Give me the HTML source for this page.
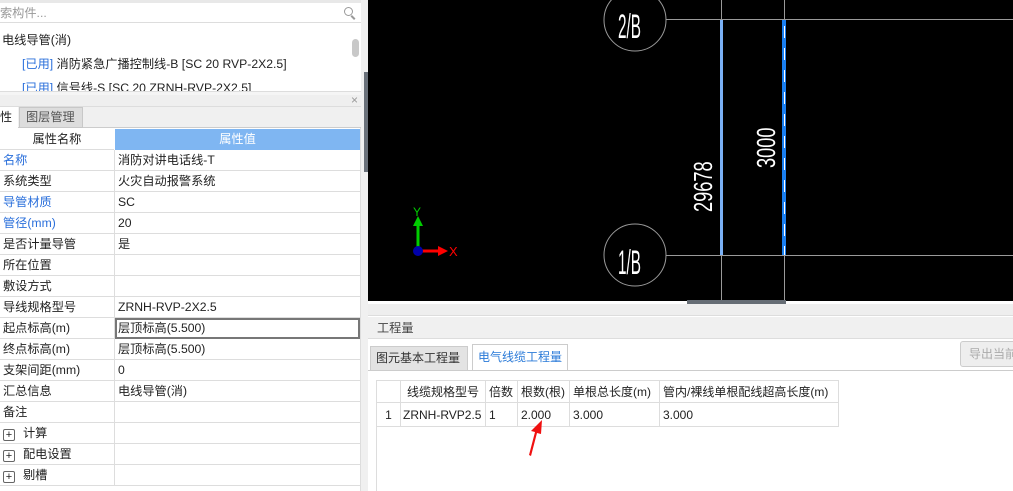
<!DOCTYPE html>
<html><head><meta charset="utf-8"><style>
*{margin:0;padding:0;box-sizing:border-box}
body{width:1013px;height:491px;overflow:hidden;background:#fff;position:relative;font-family:"Liberation Sans","Noto Sans CJK SC",sans-serif;font-size:12.2px;color:#222}
.a{position:absolute;white-space:nowrap}
.row{position:absolute;left:0;width:360px;height:21px;border-bottom:1px solid #ddd}
.row span{position:absolute;top:0;line-height:20px;white-space:nowrap}
.row .k{left:3px}.row .v{left:118px}
.row .sep{position:absolute;left:114px;top:0;width:1px;height:21px;background:#ddd}
.blue{color:#2a6fdb}
.pl{display:inline-block;width:12px;height:12px;border:1px solid #666;border-radius:2px;font-size:11px;line-height:10px;text-align:center;margin-right:8px;vertical-align:-1px;font-style:normal}
td{border:1px solid #ddd;height:22px;padding:0 3px;white-space:nowrap;font-size:12px;overflow:hidden}
table{border-collapse:collapse;table-layout:fixed}
</style></head><body>
<div class="a" style="left:0;top:0;width:362px;height:3px;background:#e8e8e8"></div>
<div class="a" style="left:0;top:3px;width:362px;height:20px;border-bottom:1px solid #ddd;color:#999;line-height:20px">索构件...</div>
<div class="a" style="left:344px;top:7px;width:9px;height:9px;border:1.5px solid #999;border-radius:50%"></div>
<div class="a" style="left:352px;top:15px;width:2px;height:5px;background:#999;transform:rotate(-45deg)"></div>
<div class="a" style="left:2px;top:30px">电线导管(消)</div>
<div class="a" style="left:22px;top:54px"><span class="blue">[已用]</span> 消防紧急广播控制线-B [SC 20 RVP-2X2.5]</div>
<div class="a" style="left:22px;top:78px;height:13px;overflow:hidden"><span class="blue">[已用]</span> 信号线-S [SC 20 ZRNH-RVP-2X2.5]</div>
<div class="a" style="left:352px;top:39px;width:7px;height:18px;background:#c8c8c8;border-radius:4px"></div>
<div class="a" style="left:362px;top:0;width:1px;height:92px;background:#ddd"></div>
<div class="a" style="left:0;top:91px;width:362px;height:5px;background:#f5f5f5;border-top:1px solid #ddd"></div>
<div class="a" style="left:0;top:95px;width:362px;height:12px;background:#efefef;border-bottom:1px solid #ddd"></div>
<div class="a" style="left:351px;top:93px;color:#999;font-size:12px">×</div>
<div class="a" style="left:0;top:107px;width:362px;height:21px;background:#f0f0f0;border-bottom:1px solid #ccc"></div>
<div class="a" style="left:0;top:107px;width:18px;height:21px;background:#fff;line-height:21px">性</div>
<div class="a" style="left:19px;top:107px;width:64px;height:21px;background:#ddd;border:1px solid #c8c8c8;color:#555;line-height:19px;padding-left:6px">图层管理</div>
<div class="a" style="left:0;top:129px;width:114px;height:21px;text-align:center;line-height:21px;border-bottom:1px solid #ddd">属性名称</div>
<div class="a" style="left:115px;top:129px;width:245px;height:21px;background:#7fb6f2;color:#fff;text-align:center;line-height:21px">属性值</div>
<div class="a" style="left:0;top:150px">
<div class="row" style="top:0"><span class="k blue">名称</span><div class="sep"></div><span class="v">消防对讲电话线-T</span></div>
<div class="row" style="top:21px"><span class="k">系统类型</span><div class="sep"></div><span class="v">火灾自动报警系统</span></div>
<div class="row" style="top:42px"><span class="k blue">导管材质</span><div class="sep"></div><span class="v">SC</span></div>
<div class="row" style="top:63px"><span class="k blue">管径(mm)</span><div class="sep"></div><span class="v">20</span></div>
<div class="row" style="top:84px"><span class="k">是否计量导管</span><div class="sep"></div><span class="v">是</span></div>
<div class="row" style="top:105px"><span class="k">所在位置</span><div class="sep"></div></div>
<div class="row" style="top:126px"><span class="k">敷设方式</span><div class="sep"></div></div>
<div class="row" style="top:147px"><span class="k">导线规格型号</span><div class="sep"></div><span class="v">ZRNH-RVP-2X2.5</span></div>
<div class="row" style="top:168px"><span class="k">起点标高(m)</span><div class="sep"></div><span class="v">层顶标高(5.500)</span><div class="a" style="left:115px;top:0;width:245px;height:21px;border:2px solid #777"></div></div>
<div class="row" style="top:189px"><span class="k">终点标高(m)</span><div class="sep"></div><span class="v">层顶标高(5.500)</span></div>
<div class="row" style="top:210px"><span class="k">支架间距(mm)</span><div class="sep"></div><span class="v">0</span></div>
<div class="row" style="top:231px"><span class="k">汇总信息</span><div class="sep"></div><span class="v">电线导管(消)</span></div>
<div class="row" style="top:252px"><span class="k">备注</span><div class="sep"></div></div>
<div class="row" style="top:273px"><span class="k"><i class="pl">+</i>计算</span><div class="sep"></div></div>
<div class="row" style="top:294px"><span class="k"><i class="pl">+</i>配电设置</span><div class="sep"></div></div>
<div class="row" style="top:315px"><span class="k"><i class="pl">+</i>剔槽</span><div class="sep"></div></div>
</div>
<div class="a" style="left:360px;top:128px;width:1px;height:363px;background:#ddd"></div>
<div class="a" style="left:361px;top:0;width:7px;height:491px;background:#f0f0f0"></div>
<div class="a" style="left:364px;top:72px;width:4px;height:100px;background:#6a717a"></div>
<div class="a" style="left:368px;top:0;width:645px;height:301px;background:#000">
<svg width="645" height="301" style="position:absolute;left:0;top:0">
<g stroke="#9a9a9a" stroke-width="1" fill="none">
<circle cx="267" cy="20" r="31"/><circle cx="267" cy="255" r="31"/>
<line x1="298" y1="19.5" x2="645" y2="19.5"/><line x1="298" y1="255.5" x2="645" y2="255.5"/>
<line x1="353.5" y1="0" x2="353.5" y2="301"/><line x1="416.5" y1="0" x2="416.5" y2="301"/>
</g>
<line x1="353.5" y1="20" x2="353.5" y2="255" stroke="#7ab0f5" stroke-width="3"/>
<line x1="416" y1="20" x2="416" y2="255" stroke="#1a7ff0" stroke-width="4"/>
<line x1="416.5" y1="26" x2="416.5" y2="255" stroke="#fff" stroke-width="1" stroke-dasharray="12 10"/>
<g fill="#fff" font-family="Liberation Sans,sans-serif">
<text font-size="34" transform="translate(250 38) scale(0.45 1)">2/B</text>
<text font-size="34" transform="translate(250 274) scale(0.45 1)">1/B</text>
<text font-size="26" transform="translate(344 212) rotate(-90) scale(0.7 1)">29678</text>
<text font-size="26" transform="translate(407 168) rotate(-90) scale(0.7 1)">3000</text>
</g>
<line x1="50" y1="251" x2="50" y2="226" stroke="#0c0" stroke-width="3"/>
<polygon points="45,226 55,226 50,216" fill="#0c0"/>
<text x="45" y="216" fill="#0c0" font-size="12" font-family="Liberation Sans">Y</text>
<line x1="50" y1="251" x2="72" y2="251" stroke="#f00" stroke-width="3"/>
<polygon points="70,246 70,256 80,251" fill="#f00"/>
<text x="81" y="256" fill="#f00" font-size="13" font-family="Liberation Sans">X</text>
<circle cx="50" cy="251" r="5" fill="#00a"/>
</svg>
</div>
<div class="a" style="left:687px;top:300px;width:99px;height:4px;background:#666d75"></div>
<div class="a" style="left:368px;top:304px;width:645px;height:187px;background:#fff"></div>
<div class="a" style="left:368px;top:304px;width:645px;height:12px;background:#eee;border-bottom:1px solid #ddd"></div>
<div class="a" style="left:368px;top:317px;width:645px;height:22px;background:#f0f0f0;border-bottom:1px solid #ddd;line-height:22px;padding-left:9px;color:#444">工程量</div>
<div class="a" style="left:370px;top:346px;width:98px;height:25px;background:#e3e3e3;border:1px solid #ccc;line-height:23px;padding-left:5px;color:#333;font-size:12px">图元基本工程量</div>
<div class="a" style="left:472px;top:344px;width:96px;height:27px;background:#fff;border:1px solid #ccc;border-bottom:none;line-height:25px;padding-left:5px;color:#2a7ad8;font-size:12px">电气线缆工程量</div>
<div class="a" style="left:960px;top:341px;width:60px;height:26px;background:#eee;border:1px solid #ccc;border-radius:3px;color:#aaa;line-height:24px;padding-left:8px;font-size:12px">导出当前</div>
<div class="a" style="left:368px;top:370px;width:645px;height:1px;background:#ccc"></div>
<div class="a" style="left:376px;top:380px;width:1px;height:111px;background:#ddd"></div>
<table class="a" style="left:376px;top:380px;width:462px">
<colgroup><col style="width:24px"><col style="width:85px"><col style="width:32px"><col style="width:52px"><col style="width:90px"><col style="width:179px"></colgroup>
<tr style="height:22px"><td></td><td style="text-align:center;padding:0">线缆规格型号</td><td>倍数</td><td>根数(根)</td><td>单根总长度(m)</td><td>管内/裸线单根配线超高长度(m)</td></tr>
<tr style="height:24px"><td style="text-align:center">1</td><td style="padding:0 2px">ZRNH-RVP2.5</td><td>1</td><td>2.000</td><td>3.000</td><td>3.000</td></tr>
</table>
<svg class="a" style="left:520px;top:418px" width="30" height="40"><polygon points="9,37 15,14 11,13 22,2 21,16 17,15 11,38" fill="#f01010"/></svg>
</body></html>
